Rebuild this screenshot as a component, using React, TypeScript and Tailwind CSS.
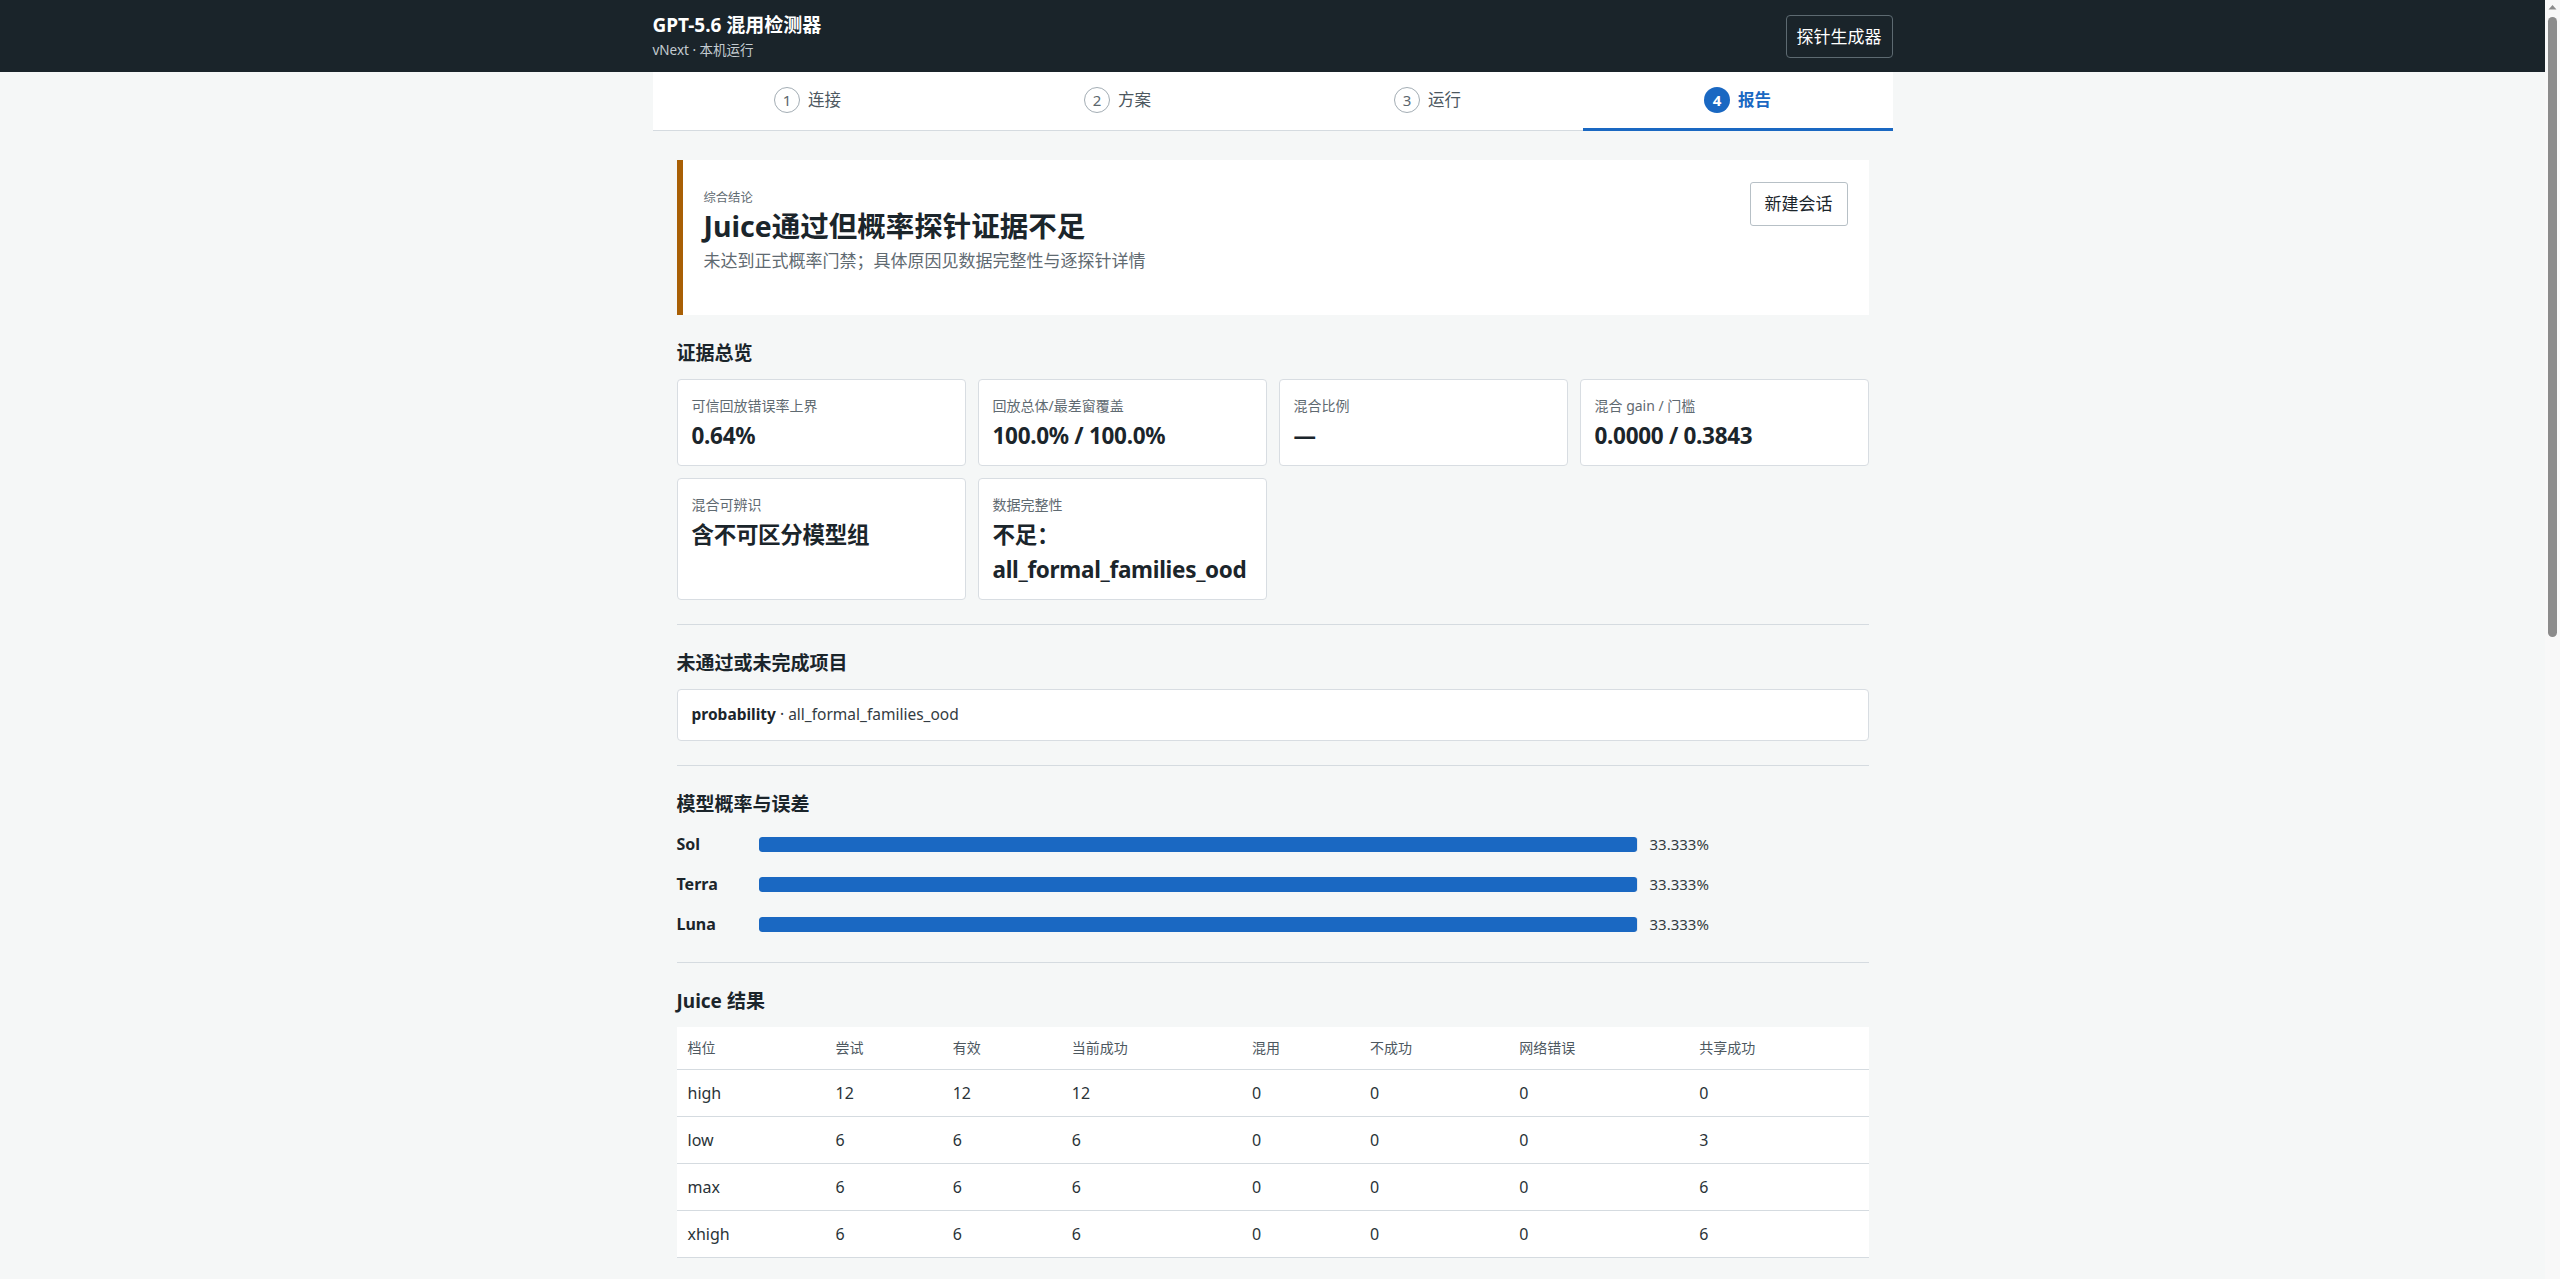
const steps = [
  { n: 1, label: '连接' },
  { n: 2, label: '方案' },
  { n: 3, label: '运行' },
  { n: 4, label: '报告' },
]

const metrics = [
  { label: '可信回放错误率上界', value: '0.64%' },
  { label: '回放总体/最差窗覆盖', value: '100.0% / 100.0%' },
  { label: '混合比例', value: '—' },
  { label: '混合 gain / 门槛', value: '0.0000 / 0.3843' },
  { label: '混合可辨识', value: '含不可区分模型组' },
  { label: '数据完整性', value: '不足：all_formal_families_ood' },
]

const models = [
  { name: 'Sol', pct: 33.333 },
  { name: 'Terra', pct: 33.333 },
  { name: 'Luna', pct: 33.333 },
]

const columns = [
  { label: '档位', w: 'w-[148px]' },
  { label: '尝试', w: 'w-[117px]' },
  { label: '有效', w: 'w-[119px]' },
  { label: '当前成功', w: 'w-[180px]' },
  { label: '混用', w: 'w-[118px]' },
  { label: '不成功', w: 'w-[149px]' },
  { label: '网络错误', w: 'w-[180px]' },
  { label: '共享成功', w: 'w-[180px]' },
]

const rows = [
  ['high', 12, 12, 12, 0, 0, 0, 0],
  ['low', 6, 6, 6, 0, 0, 0, 3],
  ['max', 6, 6, 6, 0, 0, 0, 6],
  ['xhigh', 6, 6, 6, 0, 0, 0, 6],
]

const probes = [
  ['p-001', 'formal', 'ood', '0.000', '未通过'],
  ['p-002', 'formal', 'ood', '0.000', '未通过'],
  ['p-003', 'formal', 'ood', '0.000', '未通过'],
  ['p-004', 'formal', 'ood', '0.000', '未通过'],
  ['p-005', 'formal', 'ood', '0.000', '未通过'],
  ['p-006', 'formal', 'ood', '0.000', '未通过'],
]

function SectionTitle({ children }: { children: React.ReactNode }) {
  return <h3 className="text-[19px] font-bold leading-[28px] text-[#1b252b] mb-3">{children}</h3>
}

function Divider() {
  return <hr className="border-0 border-t border-[#d5dbe0] my-6" />
}

// classic page scrollbar, as the browser drew it in the reference
function ScrollRail() {
  return (
    <div className="w-[15px] shrink-0 bg-[#f8f8f8] flex flex-col items-center">
      <svg width="15" height="15" viewBox="0 0 15 15" className="shrink-0">
        <path d="M3.5 9.5 L7.5 5 L11.5 9.5 Z" fill="#8b8b8b" />
      </svg>
      <div className="w-[9px] h-[620px] mt-[2px] rounded-full bg-[#8b8b8b]" />
    </div>
  )
}

export default function App() {
  return (
    <div className="flex h-screen bg-[#f5f7f7] text-[#1b252b] font-['Noto_Sans','Noto_Sans_CJK_SC',sans-serif]">
      <div className="flex-1 min-w-0 overflow-y-auto [scrollbar-width:none]">
        {/* Top bar */}
        <header className="bg-[#1a242a] h-[72px]">
          <div className="max-w-[1240px] mx-auto h-full flex items-center justify-between">
            <div>
              <h1 className="text-[19px] font-bold leading-[24px] text-white">GPT-5.6 混用检测器</h1>
              <div className="text-[13.5px] leading-[20px] mt-[3px] text-[#c3cbd0]">vNext · 本机运行</div>
            </div>
            <button className="h-[43px] px-[10px] border border-[#5d6a71] rounded-[4px] text-white text-[17px] leading-none">
              探针生成器
            </button>
          </div>
        </header>

        {/* Steps */}
        <nav className="max-w-[1240px] mx-auto bg-white border-b border-[#d5dbe0] grid grid-cols-4 h-[59px]">
          {steps.map(s => {
            const active = s.n === 4
            return (
              <div
                key={s.n}
                className={`flex items-center justify-center gap-2 -mb-px border-b-[3px] ${active ? 'border-[#1a68c2]' : 'border-transparent'}`}
              >
                <span
                  className={`w-[26px] h-[26px] rounded-full flex items-center justify-center text-[15px] ${
                    active ? 'bg-[#1a68c2] text-white font-bold' : 'border border-[#a3adb4] text-[#5b666d]'
                  }`}
                >
                  {s.n}
                </span>
                <span className={`text-[16.5px] ${active ? 'font-bold text-[#1a68c2]' : 'text-[#4d585f]'}`}>{s.label}</span>
              </div>
            )
          })}
        </nav>

        <main className="max-w-[1240px] mx-auto px-6 pt-[29px] pb-16">
          {/* Conclusion */}
          <section className="bg-white border-l-[6px] border-[#a85f05] h-[155px] pl-[21px] pr-[21px] pt-[22px] flex items-start justify-between">
            <div className="pt-[7px]">
              <div className="text-[12.3px] leading-[18px] text-[#5f6a71]">综合结论</div>
              <h2 className="text-[28.5px] font-bold leading-[38px] text-[#1b252b]">Juice通过但概率探针证据不足</h2>
              <p className="text-[17px] leading-[28px] text-[#5f6a71] mt-[2px]">未达到正式概率门禁；具体原因见数据完整性与逐探针详情</p>
            </div>
            <button className="h-[44px] px-[14px] bg-white border border-[#b7c0c6] rounded-[3px] text-[17px] text-[#1b252b]">
              新建会话
            </button>
          </section>

          {/* Evidence overview */}
          <div className="mt-6">
            <SectionTitle>证据总览</SectionTitle>
            <div className="grid grid-cols-4 gap-3">
              {metrics.map(m => (
                <div key={m.label} className="bg-white border border-[#d8dde2] rounded-[4px] px-[14px] pt-[16px] pb-[12px]">
                  <div className="text-[14px] leading-[20px] text-[#5f6a71]">{m.label}</div>
                  <div className="text-[22.5px] font-bold leading-[35px] tracking-[-0.3px] mt-[2px] text-[#1b252b]">{m.value}</div>
                </div>
              ))}
            </div>
          </div>

          <Divider />

          {/* Failed items */}
          <SectionTitle>未通过或未完成项目</SectionTitle>
          <div className="bg-white border border-[#d8dde2] rounded-[4px] h-[52px] px-[14px] flex items-center text-[15.5px]">
            <span className="font-bold">probability</span>
            <span className="text-[#333c42]">&nbsp;· all_formal_families_ood</span>
          </div>

          <Divider />

          {/* Model probabilities */}
          <SectionTitle>模型概率与误差</SectionTitle>
          <div className="flex flex-col gap-3">
            {models.map(m => (
              <div key={m.name} className="grid grid-cols-[70px_1fr_219px] gap-3 items-center h-[28px]">
                <span className="text-[16px] font-bold">{m.name}</span>
                <div className="h-[15px] rounded-[3px] bg-[#e3e8ec] overflow-hidden">
                  <div className="h-full bg-[#1a68c2] rounded-[3px]" style={{ width: `${m.pct * 3}%` }} />
                </div>
                <span className="text-[15px] text-[#333c42]">{m.pct.toFixed(3)}%</span>
              </div>
            ))}
          </div>

          <Divider />

          {/* Juice table */}
          <SectionTitle>Juice 结果</SectionTitle>
          <table className="w-full table-fixed bg-white border-collapse">
            <thead>
              <tr className="border-b border-[#d5dbe0] h-[42px]">
                {columns.map(c => (
                  <th key={c.label} className={`${c.w} text-left font-normal text-[14px] text-[#4d585f] px-[11px]`}>
                    {c.label}
                  </th>
                ))}
              </tr>
            </thead>
            <tbody>
              {rows.map(r => (
                <tr key={r[0]} className="border-b border-[#d5dbe0] h-[47px]">
                  {r.map((v, i) => (
                    <td key={i} className="px-[11px] text-[16px] text-[#2a3338]">
                      {v}
                    </td>
                  ))}
                </tr>
              ))}
            </tbody>
          </table>

          <Divider />

          {/* Per-probe details, below the first screen */}
          <SectionTitle>逐探针详情</SectionTitle>
          <table className="w-full bg-white border-collapse">
            <thead>
              <tr className="border-b border-[#d5dbe0] h-[42px]">
                {['探针', '类别', '分布', '概率', '状态'].map(h => (
                  <th key={h} className="text-left font-normal text-[14px] text-[#4d585f] px-[11px]">{h}</th>
                ))}
              </tr>
            </thead>
            <tbody>
              {probes.map(p => (
                <tr key={p[0]} className="border-b border-[#d5dbe0] h-[47px]">
                  {p.map((v, i) => (
                    <td key={i} className="px-[11px] text-[16px] text-[#2a3338]">{v}</td>
                  ))}
                </tr>
              ))}
            </tbody>
          </table>

          <Divider />

          <SectionTitle>原始数据</SectionTitle>
          <div className="bg-white border border-[#d8dde2] rounded-[4px] h-[700px] p-[14px] text-[14px] text-[#5f6a71]">
            session.json
          </div>
        </main>
      </div>
      <ScrollRail />
    </div>
  )
}
